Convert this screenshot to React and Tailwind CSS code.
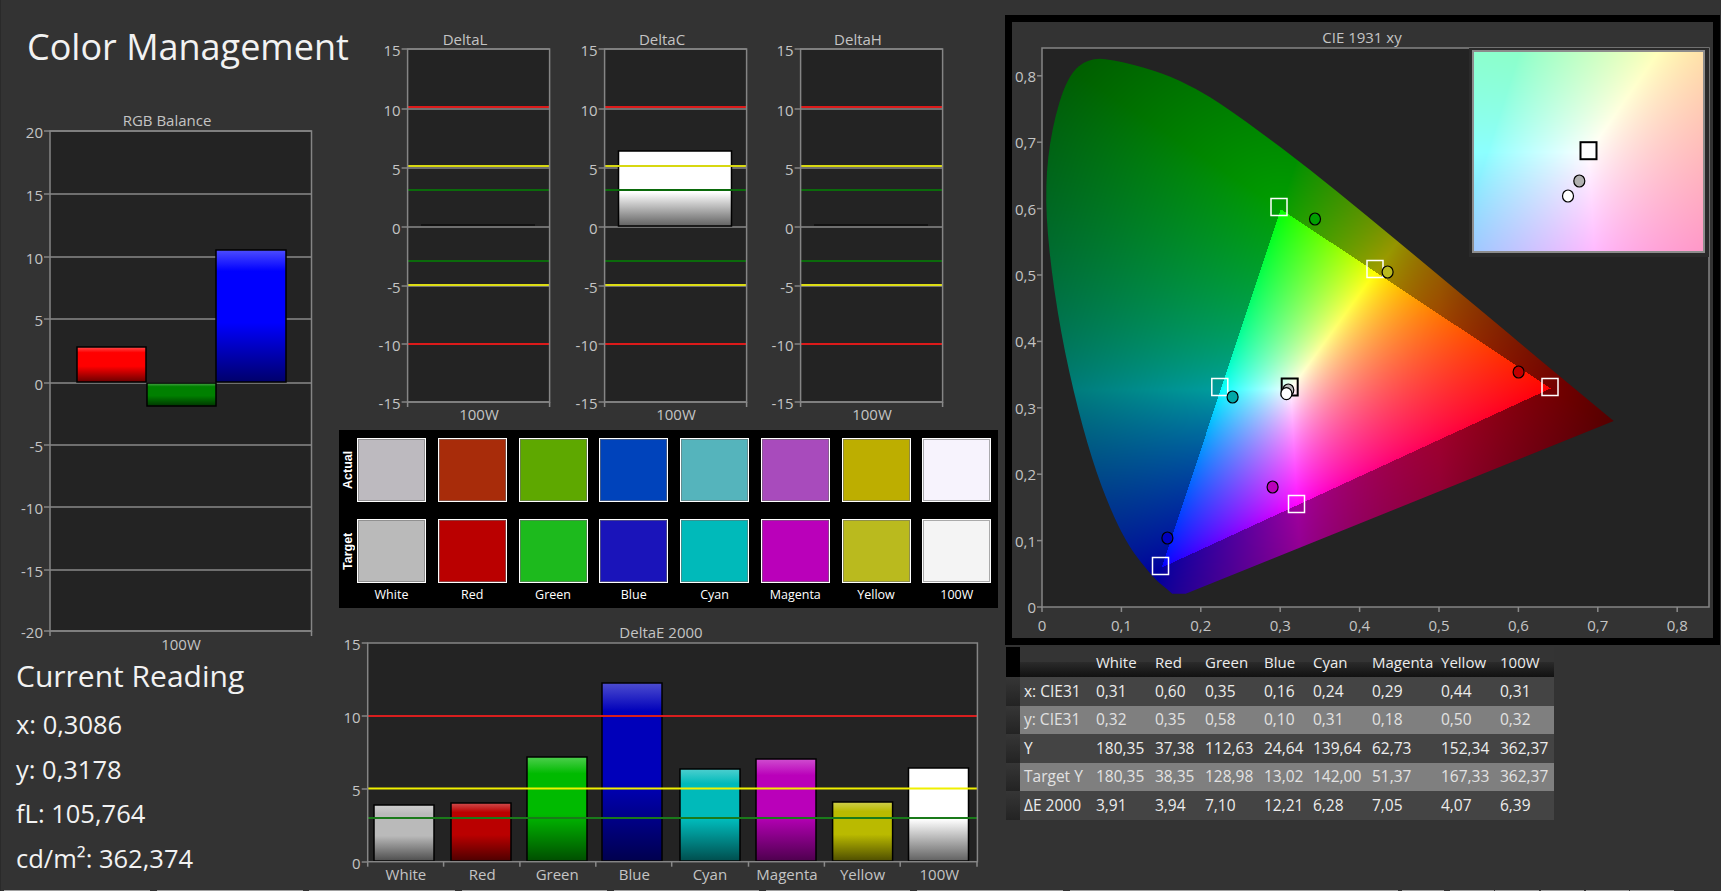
import { useEffect, useRef } from "react";

const names = ["White", "Red", "Green", "Blue", "Cyan", "Magenta", "Yellow", "100W"];
const actual = ["#bdbabf", "#a82c0a", "#5ea800", "#0043bb", "#55b4bc", "#a84bbc", "#bdae00", "#f7f3fd"];
const target = ["#bababa", "#ba0000", "#1dba1d", "#1a14ba", "#00baba", "#ba00ba", "#baba1e", "#f4f4f4"];

const rows = [
    ["x: CIE31", "0,31", "0,60", "0,35", "0,16", "0,24", "0,29", "0,44", "0,31"],
    ["y: CIE31", "0,32", "0,35", "0,58", "0,10", "0,31", "0,18", "0,50", "0,32"],
    ["Y", "180,35", "37,38", "112,63", "24,64", "139,64", "62,73", "152,34", "362,37"],
    ["Target Y", "180,35", "38,35", "128,98", "13,02", "142,00", "51,37", "167,33", "362,37"],
    ["ΔE 2000", "3,91", "3,94", "7,10", "12,21", "6,28", "7,05", "4,07", "6,39"],
];

const tabs = [
    [3, 146], [7, 146], [6, 146], [7, 145], [7, 145], [7, 144], [7, 146], [7, 145],
    [0, 183], [4, 42], [6, 44], [1, 44], [2, 43], [2, 43], [1, 44],
];

const locus = [
    [0.181, 0.02], [0.164, 0.02], [0.1566, 0.0277], [0.144, 0.0397], [0.1241, 0.0678], [0.1096, 0.0918], [0.0913, 0.1327],
    [0.0687, 0.2007], [0.0454, 0.295], [0.0235, 0.4127], [0.0082, 0.5384], [0.0039, 0.6348], [0.012, 0.72],
    [0.032, 0.8], [0.06, 0.828], [0.1, 0.822], [0.1547, 0.8029], [0.1929, 0.7816], [0.2296, 0.7543],
    [0.3016, 0.6923], [0.3731, 0.6245], [0.4441, 0.5547], [0.5125, 0.4866], [0.5752, 0.4242], [0.627, 0.3725],
    [0.72, 0.28],
];

const tri = [[0.64, 0.33], [0.3, 0.6], [0.15, 0.06]];

function segDist(px, py, a, b) {
    const dx = b[0] - a[0];
    const dy = b[1] - a[1];
    const t = Math.max(0, Math.min(1, ((px - a[0]) * dx + (py - a[1]) * dy) / (dx * dx + dy * dy)));
    return Math.hypot(px - a[0] - t * dx, py - a[1] - t * dy);
}

function chroma(x, y, outsideDim, exp) {
    const X = x / y;
    const Z = (1 - x - y) / y;
    let r = 3.2406 * X - 1.5372 - 0.4986 * Z;
    let g = -0.9689 * X + 1.8758 + 0.0415 * Z;
    let b = 0.0557 * X - 0.204 + 1.057 * Z;
    const outside = Math.min(r, g, b) < 0;
    r = Math.max(r, 0);
    g = Math.max(g, 0);
    b = Math.max(b, 0);
    const m = Math.max(r, g, b) || 1;
    let dim = 1;
    if (outside && outsideDim) {
        const d = Math.min(segDist(x, y, tri[0], tri[1]), segDist(x, y, tri[1], tri[2]), segDist(x, y, tri[2], tri[0]));
        dim = 0.62 - 0.75 * d;
        if (x > 0.5) dim *= 1 - (0.4 * (x - 0.5)) / 0.22;
    }
    const out = (c) => Math.pow(c / m, exp) * 255 * dim;
    return [out(r), out(g), out(b)];
}

function paint(w, h, fn) {
    const off = document.createElement("canvas");
    off.width = w;
    off.height = h;
    const octx = off.getContext("2d");
    const img = octx.createImageData(w, h);
    for (let j = 0; j < h; j++) {
        for (let i = 0; i < w; i++) {
            const [r, g, b] = fn(i, j);
            const k = (j * w + i) * 4;
            img.data[k] = r;
            img.data[k + 1] = g;
            img.data[k + 2] = b;
            img.data[k + 3] = 255;
        }
    }
    octx.putImageData(img, 0, 0);
    return off;
}

// plot area of the CIE chart, in frame coordinates
const sx = (v) => 30 + 794 * v;
const sy = (v) => 585 - 664 * v;

function Gamut() {
    const ref = useRef(null);
    useEffect(() => {
        const ctx = ref.current.getContext("2d");
        const w = 640;
        const h = 570;
        const horseshoe = paint(w, h, (i, j) => chroma(i / 794, Math.max((570 - j) / 664, 0.001), true, 0.8));
        ctx.save();
        ctx.beginPath();
        const pts = locus.map(([x, y]) => [sx(x), sy(y)]);
        ctx.moveTo(pts[0][0], pts[0][1]);
        ctx.lineTo(pts[1][0], pts[1][1]);
        for (let n = 2; n < pts.length - 2; n++) {
            const mx = (pts[n][0] + pts[n + 1][0]) / 2;
            const my = (pts[n][1] + pts[n + 1][1]) / 2;
            ctx.quadraticCurveTo(pts[n][0], pts[n][1], mx, my);
        }
        ctx.lineTo(pts[pts.length - 2][0], pts[pts.length - 2][1]);
        ctx.lineTo(pts[pts.length - 1][0], pts[pts.length - 1][1]);
        ctx.closePath();
        ctx.clip();
        ctx.drawImage(horseshoe, 30, 15);
        ctx.restore();

        // zoomed patch around the white point, washed towards white
        const inset = paint(229, 199, (i, j) => {
            const c = chroma(0.3127 + ((i - 114.5) / 114.5) * 0.1, 0.329 - ((j - 99.5) / 99.5) * 0.1, false, 0.8);
            return c.map((v) => v + (255 - v) * 0.55);
        });
        ctx.drawImage(inset, 462, 30);
    }, []);
    return <canvas ref={ref} width={701} height={616} className="absolute inset-0" />;
}

function mix(hex, to, t) {
    const n = parseInt(hex.slice(1), 16);
    const c = [(n >> 16) & 255, (n >> 8) & 255, n & 255];
    return `rgb(${c.map((v) => Math.round(v + (to - v) * t)).join(",")})`;
}

function Bar({ x, y, w, h, color, solid }) {
    const id = `bar-${color.slice(1)}`;
    return (
        <>
            <defs>
                <linearGradient id={id} x1="0" y1="0" x2="0" y2="1">
                    <stop offset="0" stopColor={mix(color, 255, 0.3)} />
                    <stop offset="0.16" stopColor={color} />
                    <stop offset="0.55" stopColor={color} />
                    <stop offset="1" stopColor={mix(color, 0, solid ? 0.62 : 0.58)} />
                </linearGradient>
            </defs>
            <rect x={x} y={y} width={w} height={h} fill={`url(#${id})`} stroke="#000" strokeWidth="1.5" />
        </>
    );
}

function Chart({ width, height, plot, yTicks, title, titleX, titleY, labels, ticks, grid = true, children }) {
    const [l, t, r, b] = plot;
    return (
        <svg width={width} height={height} className="block shrink-0 text-[15px]">
            <rect x={l} y={t} width={r - l} height={b - t} fill="#232323" />
            {yTicks.map(([label, y]) => (
                <g key={label}>
                    <line x1={l - 6} x2={grid ? r : l} y1={y} y2={y} stroke="#6f6f6f" strokeWidth="2" />
                    <text x={l - 7} y={y + 1} textAnchor="end" dominantBaseline="central" fill="#c4c4c4">{label}</text>
                </g>
            ))}
            {ticks.map((x) => (
                <line key={x} x1={x} x2={x} y1={b} y2={b + 5} stroke="#8a8a8a" strokeWidth="1.5" />
            ))}
            {children}
            <rect x={l} y={t} width={r - l} height={b - t} fill="none" stroke="#858585" strokeWidth="1.5" />
            <text x={titleX} y={titleY} textAnchor="middle" dominantBaseline="central" fill="#c4c4c4">{title}</text>
            {labels.map(([label, x, y]) => (
                <text key={label} x={x} y={y} textAnchor="middle" dominantBaseline="central" fill="#c4c4c4">{label}</text>
            ))}
        </svg>
    );
}

function Hline({ x1, x2, y, color, w = 2 }) {
    return <line x1={x1} x2={x2} y1={y} y2={y} stroke={color} strokeWidth={w} />;
}

const deltaTicks = [["15", 24], ["10", 84], ["5", 143], ["0", 202], ["-5", 261], ["-10", 319], ["-15", 377]];

function DeltaChart({ title, children }) {
    const l = 37.6;
    const r = 179.6;
    return (
        <Chart
            width={196.5}
            height={400}
            plot={[l, 24, r, 377]}
            yTicks={deltaTicks}
            title={title}
            titleX={95}
            titleY={14}
            labels={[["100W", 109, 389]]}
            ticks={[l, r]}
        >
            {children}
            <Hline x1={l} x2={r} y={82} color="#dc1a1a" />
            <Hline x1={l} x2={r} y={141} color="#d8d810" />
            <Hline x1={l} x2={r} y={165} color="#0b6a0b" />
            <Hline x1={l} x2={r} y={236} color="#0b6a0b" />
            <Hline x1={l} x2={r} y={260} color="#dcdc14" />
            <Hline x1={l} x2={r} y={319} color="#dc1a1a" />
        </Chart>
    );
}

function Swatch({ color }) {
    return (
        <div
            className="h-[64px] w-[69px] border border-white shadow-[inset_0_0_0_1px_rgba(110,110,110,0.55)] bg-(--c)"
            style={{ "--c": color }}
        />
    );
}

function Square({ x, y, stroke = "#fff", fill = "none", w = 1.5 }) {
    return <rect x={x - 8 - 1012} y={y - 8.5 - 22} width="16" height="17" fill={fill} stroke={stroke} strokeWidth={w} />;
}

function Dot({ x, y, fill }) {
    return <ellipse cx={x - 1012} cy={y - 22} rx="5.5" ry="6" fill={fill} stroke="#000" strokeWidth="1.2" />;
}

function CieChart() {
    const yT = [["0,8", 0.8], ["0,7", 0.7], ["0,6", 0.6], ["0,5", 0.5], ["0,4", 0.4], ["0,3", 0.3], ["0,2", 0.2], ["0,1", 0.1], ["0", 0]];
    const xT = [["0", 0], ["0,1", 0.1], ["0,2", 0.2], ["0,3", 0.3], ["0,4", 0.4], ["0,5", 0.5], ["0,6", 0.6], ["0,7", 0.7], ["0,8", 0.8]];
    return (
        <div className="relative h-[630px] w-[715px] border-[7px] border-black bg-[#333]">
            <svg width="701" height="616" className="block text-[15px]">
                <rect x="30" y="26" width="667" height="559" fill="#232323" stroke="#858585" strokeWidth="1.5" />
                <text x="350" y="15" textAnchor="middle" dominantBaseline="central" fill="#c4c4c4">CIE 1931 xy</text>
                {yT.map(([label, v]) => (
                    <g key={label}>
                        <line x1="25" x2="30" y1={sy(v)} y2={sy(v)} stroke="#8a8a8a" strokeWidth="1.5" />
                        <text x="24" y={sy(v)} textAnchor="end" dominantBaseline="central" fill="#c4c4c4">{label}</text>
                    </g>
                ))}
                {xT.map(([label, v]) => (
                    <g key={label}>
                        <line x1={sx(v)} x2={sx(v)} y1="585" y2="590" stroke="#8a8a8a" strokeWidth="1.5" />
                        <text x={sx(v)} y="603" textAnchor="middle" dominantBaseline="central" fill="#c4c4c4">{label}</text>
                    </g>
                ))}
                <rect x="457" y="26" width="240" height="209" fill="#2a2a2a" />
            </svg>
            <Gamut />
            <svg width="701" height="616" className="absolute inset-0">
                <rect x="461" y="29" width="231" height="201" fill="none" stroke="#8c8c8c" strokeWidth="2" />
                <Square x={1279} y={207} />
                <Square x={1375} y={269} />
                <Square x={1219.8} y={387} />
                <Square x={1550} y={387} />
                <Square x={1296.5} y={504} />
                <Square x={1160.5} y={566} />
                <Square x={1289.7} y={387} stroke="#000" w={2} />
                <Dot x={1315} y={219} fill="#00a000" />
                <Dot x={1387.6} y={272} fill="#baba1e" />
                <Dot x={1232.6} y={397} fill="#00a8a8" />
                <Dot x={1518.6} y={372} fill="#c00000" />
                <Dot x={1167.4} y={538} fill="#0000c0" />
                <Dot x={1272.6} y={487} fill="#ba00ba" />
                <Dot x={1288.3} y={390} fill="#bababa" />
                <Dot x={1286.4} y={393.7} fill="#ffffff" />
                <Square x={1588.5} y={150.7} stroke="#000" fill="#fff" w={2} />
                <Dot x={1579.3} y={181} fill="#b0b0b0" />
                <Dot x={1568} y={196} fill="#ffffff" />
            </svg>
        </div>
    );
}

function DataTable() {
    return (
        <table className="ml-px mt-[2px] w-[548px] table-fixed border-collapse text-[15.5px] leading-none text-[#ececec]">
            <colgroup>
                <col className="w-[14px]" />
                <col className="w-[76px]" />
                <col className="w-[59px]" />
                <col className="w-[50px]" />
                <col className="w-[59px]" />
                <col className="w-[49px]" />
                <col className="w-[59px]" />
                <col className="w-[69px]" />
                <col className="w-[59px]" />
                <col className="w-[54px]" />
            </colgroup>
            <thead>
                <tr className="h-[30px] bg-[linear-gradient(#343434_0%,#343434_50%,#2b2b2b_50%,#111_100%)]">
                    <th className="bg-black p-0" />
                    <th className="p-0" />
                    {names.map((n) => (
                        <th key={n} className="p-0 pt-[1px] text-left text-[15px] font-normal">{n}</th>
                    ))}
                </tr>
            </thead>
            <tbody>
                {rows.map((row, i) => (
                    <tr key={row[0]} className={i % 2 ? "h-[28.5px] bg-[#7f7f7f] text-[#e2e2e2]" : "h-[28.5px] bg-[#444]"}>
                        <td className="bg-[linear-gradient(#363636,#232323)] p-0" />
                        {row.map((c, j) => (
                            <td key={j} className={j ? "whitespace-nowrap p-0" : "whitespace-nowrap p-0 pl-[4px]"}>{c}</td>
                        ))}
                    </tr>
                ))}
            </tbody>
        </table>
    );
}

export default function App() {
    return (
        <div className="flex h-[891px] w-[1721px] flex-col overflow-hidden border-l border-[#2a2a2a] bg-[#333] font-['Open_Sans',sans-serif]">
            <div className="flex h-[890px] -ml-px">
                {/* left column */}
                <div className="w-[339px] shrink-0">
                    <h1 className="h-[110px] whitespace-nowrap pl-[27px] pt-[23px] text-[36px] font-normal leading-[48px] text-[#f2f2f2]">Color Management</h1>
                    <Chart
                        width={339}
                        height={550}
                        plot={[50, 21, 311.5, 521]}
                        yTicks={[["20", 21], ["15", 84], ["10", 147], ["5", 209], ["0", 273], ["-5", 335], ["-10", 397], ["-15", 460], ["-20", 521]]}
                        title="RGB Balance"
                        titleX={167}
                        titleY={10}
                        labels={[["100W", 181, 534]]}
                        ticks={[50, 311.5]}
                    >
                        <Bar x={77} y={237} w={69} h={35} color="#ff0000" />
                        <Bar x={147} y={273} w={69} h={23} color="#008000" />
                        <Bar x={216} y={140} w={70} h={132} color="#0000ff" />
                    </Chart>
                    <div className="-mt-[4px] pl-[16px] text-[#f2f2f2]">
                        <div className="text-[30px] leading-[40px]">Current Reading</div>
                        <div className="mt-[6px] text-[25.5px] leading-[44.5px]">
                            <div>x: 0,3086</div>
                            <div>y: 0,3178</div>
                            <div>fL: 105,764</div>
                            <div>cd/m²: 362,374</div>
                        </div>
                    </div>
                </div>

                {/* middle column */}
                <div className="w-[666px] shrink-0 pt-[25px]">
                    <div className="flex pl-[31px]">
                        <DeltaChart title="DeltaL">
                            <Hline x1={51} x2={165} y={200} color="#111" />
                        </DeltaChart>
                        <DeltaChart title="DeltaC">
                            <Bar x={51.5} y={126} w={113} h={75} color="#ffffff" solid />
                        </DeltaChart>
                        <DeltaChart title="DeltaH">
                            <Hline x1={51} x2={165} y={200} color="#111" />
                        </DeltaChart>
                    </div>

                    <div className="mt-[5px] h-[178px] w-[659px] bg-black pl-[18px] pt-[8px]">
                        <div className="relative grid w-[634px] grid-cols-8 gap-x-[12px] gap-y-[17px]">
                            <span className="absolute -left-[18px] top-0 flex h-[64px] w-[18px] items-center justify-center font-['Liberation_Sans',sans-serif] text-[12.5px] font-bold text-white [writing-mode:vertical-rl] rotate-180">Actual</span>
                            <span className="absolute -left-[18px] top-[81px] flex h-[64px] w-[18px] items-center justify-center font-['Liberation_Sans',sans-serif] text-[12.5px] font-bold text-white [writing-mode:vertical-rl] rotate-180">Target</span>
                            {actual.map((c) => <Swatch key={c} color={c} />)}
                            {target.map((c) => <Swatch key={c} color={c} />)}
                        </div>
                        <div className="mt-[2px] grid w-[634px] grid-cols-8 gap-x-[12px] text-white">
                            {names.map((n) => (
                                <div key={n} className="w-[69px] text-center text-[12.5px] leading-[20px]">{n}</div>
                            ))}
                        </div>
                    </div>

                    <div className="mt-[12px]">
                        <Chart
                            width={659}
                            height={265}
                            plot={[28.7, 23, 638.4, 241.7]}
                            yTicks={[["15", 23], ["10", 96], ["5", 169], ["0", 242]]}
                            title="DeltaE 2000"
                            titleX={322}
                            titleY={11.7}
                            grid={false}
                            labels={[
                                ["White", 66.9, 254], ["Red", 143.2, 254], ["Green", 218.2, 254], ["Blue", 295.4, 254],
                                ["Cyan", 370.9, 254], ["Magenta", 448, 254], ["Yellow", 523.5, 254], ["100W", 600.3, 254],
                            ]}
                            ticks={[28.7, 104.6, 180.9, 256.8, 332.7, 409.5, 485.4, 561.2, 638]}
                        >
                            <Bar x={35} y={185} w={60} h={56} color="#bababa" />
                            <Bar x={112} y={183} w={60} h={58} color="#ba0000" />
                            <Bar x={188} y={137} w={60} h={104} color="#00ba00" />
                            <Bar x={263} y={63} w={60} h={178} color="#0000ba" />
                            <Bar x={341} y={149} w={60} h={92} color="#00baba" />
                            <Bar x={417} y={139} w={60} h={102} color="#ba00ba" />
                            <Bar x={493.6} y={182} w={60} h={59} color="#baba00" />
                            <Bar x={569.5} y={148} w={60} h={93} color="#ffffff" solid />
                            <Hline x1={28.7} x2={638.4} y={96} color="#d81e1e" />
                            <Hline x1={28.7} x2={638.4} y={168.5} color="#f0f000" />
                            <Hline x1={28.7} x2={638.4} y={198} color="#1a7a1a" />
                        </Chart>
                    </div>
                </div>

                {/* right column */}
                <div className="flex-1 pt-[15px]">
                    <CieChart />
                    <DataTable />
                </div>
            </div>

            {/* bottom tab strip */}
            <div className="flex h-px">
                {tabs.map(([gap, w], i) => (
                    <div key={i} className="h-px bg-[#a0a0a0]" style={{ marginLeft: gap, width: w }} />
                ))}
            </div>
        </div>
    );
}
